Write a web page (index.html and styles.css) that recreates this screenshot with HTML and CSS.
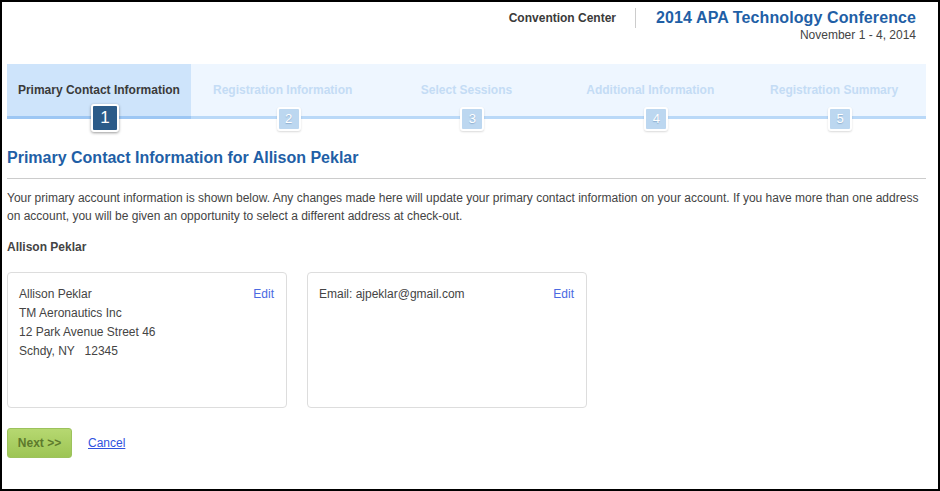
FILE: index.html
```html
<!DOCTYPE html>
<html>
<head lang="en">
    <meta charset="UTF-8">
    <title>Primary Contact Information</title>
    <link rel="stylesheet" href="styles.css">
</head>
<body>
<div id="frame">
    <div id="header">
        <div class="venue">Convention Center</div>
        <div class="event">
            <div class="event-title">2014 APA Technology Conference</div>
            <div class="event-date">November 1 - 4, 2014</div>
        </div>
    </div>
    <ul id="steps">
        <li class="active"><span class="label">Primary Contact Information</span><span class="num">1</span></li>
        <li><span class="label">Registration Information</span><span class="num">2</span></li>
        <li><span class="label">Select Sessions</span><span class="num">3</span></li>
        <li><span class="label">Additional Information</span><span class="num">4</span></li>
        <li><span class="label">Registration Summary</span><span class="num">5</span></li>
    </ul>
    <h1>Primary Contact Information for Allison Peklar</h1>
    <p class="intro">Your primary account information is shown below. Any changes made here will update your primary contact information on your account. If you have more than one address on account, you will be given an opportunity to select a different address at check-out.</p>
    <div class="name">Allison Peklar</div>
    <div id="cards">
        <div class="card">
            <div class="lines">
                <div>Allison Peklar</div>
                <div>TM Aeronautics Inc</div>
                <div>12 Park Avenue Street 46</div>
                <div>Schdy, NY &nbsp; 12345</div>
            </div>
            <a href="#" class="edit">Edit</a>
        </div>
        <div class="card">
            <div class="lines">
                <div>Email: ajpeklar@gmail.com</div>
            </div>
            <a href="#" class="edit">Edit</a>
        </div>
    </div>
    <div id="actions">
        <button class="next">Next &gt;&gt;</button>
        <a href="#" class="cancel">Cancel</a>
    </div>
</div>
</body>
</html>
```

FILE: styles.css
```css
*{
    margin: 0;
    padding: 0;
}
li{
    list-style: none;
}
body{
    font-family: "Liberation Sans", Arial, sans-serif;
    font-size: 12px;
    color: #444444;
}
#frame{
    width: 940px;
    height: 491px;
    box-sizing: border-box;
    border: 2px solid #000000;
    padding: 0 12px 0 5px;
}
#header{
    height: 62px;
    display: flex;
    justify-content: flex-end;
    align-items: flex-start;
    padding: 6px 10px 0 0;
    box-sizing: border-box;
}
#header .venue{
    font-weight: bold;
    color: #3a3a3a;
    line-height: 20px;
    padding-right: 19px;
    border-right: 1px solid #cccccc;
    height: 20px;
    margin-right: 20px;
}
#header .event{
    text-align: right;
}
#header .event-title{
    font-size: 16px;
    font-weight: bold;
    color: #1f5fa6;
    line-height: 20px;
    letter-spacing: 0.1px;
}
#header .event-date{
    color: #444444;
    line-height: 15px;
}
#steps{
    display: flex;
}
#steps li{
    flex: 1;
    position: relative;
    height: 52px;
    background: #eef6ff;
    border-bottom: 3px solid #bad9f8;
    text-align: center;
}
#steps .label{
    display: block;
    padding-top: 19px;
    line-height: 14px;
    font-weight: bold;
    color: #c4dcf5;
}
#steps .num{
    position: absolute;
    top: 43px;
    left: calc(50% + 6px);
    transform: translateX(-50%);
    width: 20px;
    height: 20px;
    line-height: 20px;
    border: 2px solid #ffffff;
    border-radius: 3px;
    background: #bcd7f0;
    color: #ffffff;
    font-size: 13px;
    text-shadow: 0 1px 1px #8fb0d0;
    box-shadow: 0 1px 2px rgba(0,0,0,0.15);
}
#steps .active{
    background: #cee4fb;
    border-bottom-color: #9dc7f4;
}
#steps .active .label{
    color: #3a3a3a;
}
#steps .active .num{
    top: 40px;
    width: 24px;
    height: 24px;
    line-height: 24px;
    background: #2b5b89;
    font-size: 17px;
    text-shadow: none;
    box-shadow: 0 1px 3px rgba(0,0,0,0.4);
}
h1{
    margin-top: 29px;
    font-size: 16px;
    line-height: 20px;
    color: #1f5fa6;
    padding-bottom: 10px;
    border-bottom: 1px solid #cccccc;
}
.intro{
    margin-top: 10px;
    line-height: 18px;
}
.name{
    margin-top: 13px;
    line-height: 18px;
    font-weight: bold;
}
#cards{
    display: flex;
    gap: 20px;
    margin-top: 16px;
}
.card{
    width: 280px;
    height: 136px;
    box-sizing: border-box;
    border: 1px solid #dddddd;
    border-radius: 4px;
    padding: 12px 12px 0 11px;
    display: flex;
    justify-content: space-between;
    align-items: flex-start;
}
.card .lines{
    line-height: 19px;
}
.card .edit{
    line-height: 19px;
    color: #4a6ae2;
    text-decoration: none;
}
#actions{
    display: flex;
    align-items: center;
    margin-top: 20px;
}
.next{
    width: 65px;
    height: 30px;
    border: 1px solid #9cc25c;
    border-radius: 3px;
    background: linear-gradient(#b6d871, #9dc554);
    color: #5d7a2c;
    font-family: "Liberation Sans", Arial, sans-serif;
    font-size: 12px;
    font-weight: bold;
    cursor: pointer;
}
.cancel{
    margin-left: 16px;
    color: #2f52e0;
}
```
